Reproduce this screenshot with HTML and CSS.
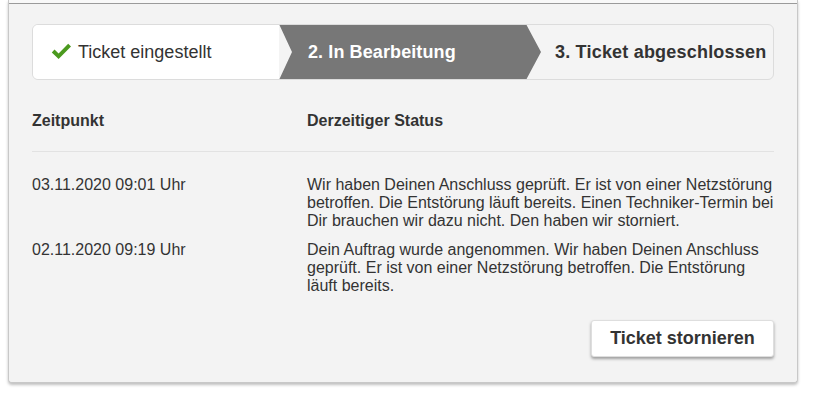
FILE: index.html
```html
<!DOCTYPE html>
<html lang="de">
<head>
<meta charset="utf-8">
<title>Ticket</title>
<link rel="stylesheet" href="styles.css">
</head>
<body>
<div class="panel">
  <div class="panel-body">
    <div class="stepper">
      <div class="step step-done">
        <svg class="check" width="21" height="17" viewBox="0 0 21 17" aria-hidden="true">
          <path d="M0.8 9.4 L3.5 6.6 L7.6 10.4 L17.2 0.8 L20 3.6 L7.6 16 Z" fill="#4b9a1f"/>
        </svg>
        <span>Ticket eingestellt</span>
      </div>
      <div class="step step-active">2. In Bearbeitung</div>
      <div class="step step-next">3. Ticket abgeschlossen</div>
    </div>

    <div class="table">
      <div class="row head">
        <div class="col-time">Zeitpunkt</div>
        <div class="col-status">Derzeitiger Status</div>
      </div>
      <div class="rows">
        <div class="row">
          <div class="col-time">03.11.2020 09:01 Uhr</div>
          <div class="col-status">Wir haben Deinen Anschluss geprüft. Er ist von einer Netzstörung betroffen. Die Entstörung läuft bereits. Einen Techniker-Termin bei Dir brauchen wir dazu nicht. Den haben wir storniert.</div>
        </div>
        <div class="row">
          <div class="col-time">02.11.2020 09:19 Uhr</div>
          <div class="col-status">Dein Auftrag wurde angenommen. Wir haben Deinen Anschluss geprüft. Er ist von einer Netzstörung betroffen. Die Entstörung läuft bereits.</div>
        </div>
      </div>
    </div>

    <div class="actions">
      <button class="btn" type="button">Ticket stornieren</button>
    </div>
  </div>
</div>
</body>
</html>
```

FILE: styles.css
```css
html, body {
  margin: 0;
  padding: 0;
  background: #fff;
}

body {
  font-family: "Liberation Sans", Arial, sans-serif;
  color: #333;
  width: 839px;
  height: 400px;
  overflow: hidden;
}

.panel {
  width: 788px;
  margin-left: 8px;
  padding-top: 3px;
  border: 1px solid #c8c8c8;
  border-top: none;
  border-radius: 0 0 4px 4px;
  background: #f8f8f8;
  box-shadow: 0 2px 3px rgba(0, 0, 0, 0.25);
}

.panel-body {
  border-top: 1px solid #9a9a9a;
  background: #f3f3f3;
  padding: 20px 23px 25px 23px;
  border-radius: 0 0 4px 4px;
}

.stepper {
  display: flex;
  height: 54px;
  border: 1px solid #dcdcdc;
  border-radius: 6px;
  overflow: hidden;
  background: #f4f4f4;
}

.step {
  display: flex;
  align-items: center;
  font-size: 18px;
  height: 100%;
}

.step-done {
  width: 246px;
  background: #fff;
  padding-left: 18px;
  box-sizing: border-box;
  gap: 6px;
  color: #333;
}

.check {
  display: block;
  margin-top: -1px;
}

.step-active {
  width: 262px;
  flex: none;
  box-sizing: border-box;
  padding-left: 29px;
  margin-top: -1px;
  margin-bottom: -1px;
  height: 56px;
  background: #777;
  color: #fff;
  font-weight: bold;
  letter-spacing: 0.1px;
  clip-path: polygon(0 0, calc(100% - 15px) 0, 100% 50%, calc(100% - 15px) 100%, 0 100%, 13px 50%);
}

.step-next {
  flex: 1;
  padding-left: 14px;
  font-weight: bold;
  letter-spacing: 0.2px;
  color: #333;
}

.table {
  margin-top: 31px;
}

.row {
  display: flex;
}

.head {
  font-weight: bold;
  font-size: 16px;
  line-height: 20px;
  padding-bottom: 20px;
  border-bottom: 1px solid #e2e2e2;
}

.col-time {
  width: 275px;
  flex: none;
}

.col-status {
  flex: 1;
}

.rows {
  display: flex;
  flex-direction: column;
  gap: 11px;
  padding-top: 24px;
  font-size: 16px;
  line-height: 18px;
}

.actions {
  display: flex;
  justify-content: flex-end;
  margin-top: 25px;
}

.btn {
  font-family: "Liberation Sans", Arial, sans-serif;
  font-weight: bold;
  font-size: 18px;
  color: #333;
  background: #fff;
  border: 1px solid #dedede;
  border-radius: 3px;
  height: 37px;
  width: 183px;
  padding: 0;
  box-shadow: 0 2px 3px rgba(0, 0, 0, 0.35);
  cursor: pointer;
}
```
